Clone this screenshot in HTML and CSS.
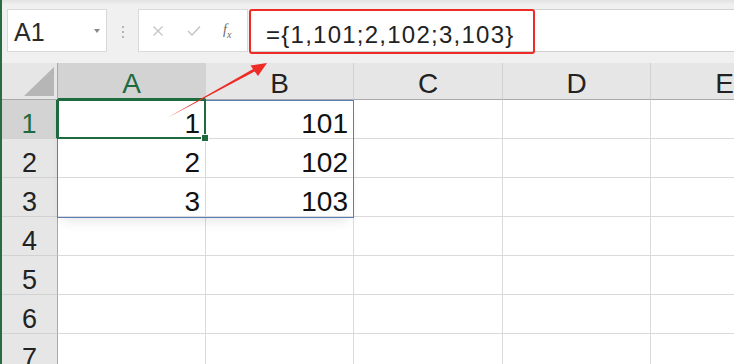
FILE: index.html
```html
<!DOCTYPE html>
<html lang="zh">
<head>
    <meta charset="UTF-8">
    <title>Sheet1</title>
    <link rel="stylesheet" href="styles.css">
</head>
<body>

<div class="app">
    <div class="toolbar">
        <div class="name-box">
            <span class="name-text">A1</span>
            <span class="caret"></span>
        </div>
        <div class="grip"><i></i><i></i><i></i></div>
        <div class="fx-group">
            <svg class="btn-icon" width="12" height="12" viewBox="0 0 12 12">
                <path d="M1.5 1.5 L10.5 10.5 M10.5 1.5 L1.5 10.5" stroke="#c3c3c3" stroke-width="1.3" fill="none"/>
            </svg>
            <svg class="btn-icon" width="14" height="12" viewBox="0 0 14 12">
                <path d="M1 6 L5 10 L13 1.5" stroke="#c3c3c3" stroke-width="1.4" fill="none"/>
            </svg>
            <span class="fx"><i>f</i><sub>x</sub></span>
        </div>
        <div class="formula">
            <div class="callout">={1,101;2,102;3,103}</div>
        </div>
    </div>

    <div class="sheet">
        <div class="corner"><span class="tri"></span></div>
        <div class="col-head active">A</div>
        <div class="col-head">B</div>
        <div class="col-head">C</div>
        <div class="col-head">D</div>
        <div class="col-head">E</div>

        <div class="row-head active">1</div>
        <div class="cell">1</div>
        <div class="cell">101</div>
        <div class="cell"></div>
        <div class="cell"></div>
        <div class="cell"></div>

        <div class="row-head">2</div>
        <div class="cell">2</div>
        <div class="cell">102</div>
        <div class="cell"></div>
        <div class="cell"></div>
        <div class="cell"></div>

        <div class="row-head">3</div>
        <div class="cell">3</div>
        <div class="cell">103</div>
        <div class="cell"></div>
        <div class="cell"></div>
        <div class="cell"></div>

        <div class="row-head">4</div>
        <div class="cell"></div>
        <div class="cell"></div>
        <div class="cell"></div>
        <div class="cell"></div>
        <div class="cell"></div>

        <div class="row-head">5</div>
        <div class="cell"></div>
        <div class="cell"></div>
        <div class="cell"></div>
        <div class="cell"></div>
        <div class="cell"></div>

        <div class="row-head">6</div>
        <div class="cell"></div>
        <div class="cell"></div>
        <div class="cell"></div>
        <div class="cell"></div>
        <div class="cell"></div>

        <div class="row-head">7</div>
        <div class="cell"></div>
        <div class="cell"></div>
        <div class="cell"></div>
        <div class="cell"></div>
        <div class="cell"></div>

        <!-- range A1:B3 and active cell, laid over the grid -->
        <div class="range"></div>
        <div class="selection"><span class="handle"></span></div>
    </div>

    <!-- annotation arrow pointing at the formula -->
    <svg class="arrow" width="734" height="364" viewBox="0 0 734 364">
        <polygon points="167,118 256.7,70.3 255.3,67.7" fill="#ee2b25"/>
        <polygon points="267,63 258,76 250.5,65.5" fill="#ee2b25"/>
    </svg>
</div>

</body>
</html>
```

FILE: styles.css
```css
html, body {
    margin: 0;
    padding: 0;
    height: 100%;
    overflow: hidden;
    background: #fff;
}

body {
    font-family: 'Liberation Sans', Arial, sans-serif;
    color: #1f1f1f;
}

.app {
    position: relative;
    height: 364px;
    border-left: 2px solid #2a6b43;
    overflow: hidden;
}

/* top bar with name box and formula */
.toolbar {
    height: 63px;
    box-sizing: border-box;
    padding-top: 9px;
    display: flex;
    align-items: flex-start;
    background: linear-gradient(to bottom, #e2e2e2 0, #f0f0f0 5px, #f0f0f0 100%);
}

.name-box {
    margin-left: 5px;
    width: 100px;
    height: 43px;
    box-sizing: border-box;
    background: #fff;
    border: 1px solid #d9d9d9;
    display: flex;
    align-items: flex-start;
    padding: 8px 0 0 6px;
}

.name-text {
    font-size: 25px;
    line-height: 28px;
    color: #2b2b2b;
    flex: 1;
}

.caret {
    width: 0;
    height: 0;
    margin: 11px 6px 0 0;
    border-left: 3px solid transparent;
    border-right: 3px solid transparent;
    border-top: 4px solid #8a8a8a;
}

.grip {
    width: 31px;
    display: flex;
    flex-direction: column;
    align-items: center;
    gap: 3px;
    padding-top: 17px;
}

.grip i {
    width: 2px;
    height: 2px;
    background: #b5b5b5;
}

.fx-group {
    width: 110px;
    height: 43px;
    box-sizing: border-box;
    background: #fff;
    border: 1px solid #d9d9d9;
    display: flex;
    align-items: center;
    padding-left: 13px;
    gap: 23px;
}

.fx {
    font-family: 'Liberation Serif', serif;
    font-size: 14px;
    color: #6a6a6a;
    margin-left: -1px;
}

.fx sub {
    font-size: 10px;
    font-style: italic;
}

.formula {
    flex: 1;
    margin-left: 2px;
    height: 43px;
    box-sizing: border-box;
    background: #fff;
    border: 1px solid #d0d0d0;
    border-right: none;
}

.callout {
    width: 286px;
    height: 45px;
    margin: -1px 0 0 -2px;
    box-sizing: border-box;
    border: 2px solid #ee2b25;
    border-radius: 3px;
    padding: 10px 0 0 15px;
    font-size: 24px;
    line-height: 28px;
    letter-spacing: 1.25px;
    color: #222;
    white-space: nowrap;
}

/* grid */
.sheet {
    position: relative;
    display: grid;
    grid-template-columns: 56px 148px 148px 149px 148px 148px;
    grid-template-rows: 37px repeat(7, 39px);
}

.corner {
    background: #e6e6e6;
    border-right: 1px solid #a9a9a9;
    border-bottom: 1px solid #a9a9a9;
    position: relative;
}

.tri {
    position: absolute;
    right: 3px;
    bottom: 3px;
    width: 0;
    height: 0;
    border-left: 30px solid transparent;
    border-bottom: 29px solid #b6b6b6;
}

.col-head {
    background: #e6e6e6;
    border-right: 1px solid #d2d2d2;
    border-bottom: 1px solid #a9a9a9;
    text-align: center;
    font-size: 28px;
    line-height: 30px;
    padding-top: 6px;
    color: #222;
}

.col-head.active {
    background: #d3d3d3;
    color: #1e6b40;
    border-bottom: 2px solid #1e6b40;
}

.row-head {
    background: #e6e6e6;
    border-right: 1px solid #a9a9a9;
    border-bottom: 1px solid #d2d2d2;
    text-align: center;
    font-size: 27px;
    line-height: 30px;
    padding-top: 9px;
    color: #222;
}

.row-head.active {
    background: #d3d3d3;
    color: #1e6b40;
    border-right: 2px solid #1e6b40;
}

.cell {
    border-right: 1px solid #dadada;
    border-bottom: 1px solid #dadada;
    text-align: right;
    font-size: 28px;
    line-height: 30px;
    padding: 9px 5px 0 0;
    color: #111;
}

.col-head, .row-head, .cell {
    box-sizing: border-box;
}

/* overlays take their grid area as containing block */
.range {
    position: absolute;
    grid-column: 2 / 4;
    grid-row: 2 / 5;
    top: 0;
    bottom: -1px;
    left: -1px;
    right: 0;
    border: 1px solid #5a7db5;
    box-shadow: 0 8px 12px -6px rgba(0, 0, 0, 0.12);
    pointer-events: none;
}

.selection {
    position: absolute;
    grid-column: 2 / 3;
    grid-row: 2 / 3;
    top: -1px;
    left: -1px;
    right: 0;
    bottom: 0;
    border: 2px solid #1e6b40;
    pointer-events: none;
}

.handle {
    position: absolute;
    right: -5px;
    bottom: -5px;
    width: 6px;
    height: 6px;
    background: #1e6b40;
    border: 1px solid #fff;
}

.arrow {
    position: absolute;
    left: -2px;
    top: 0;
    pointer-events: none;
}
```
